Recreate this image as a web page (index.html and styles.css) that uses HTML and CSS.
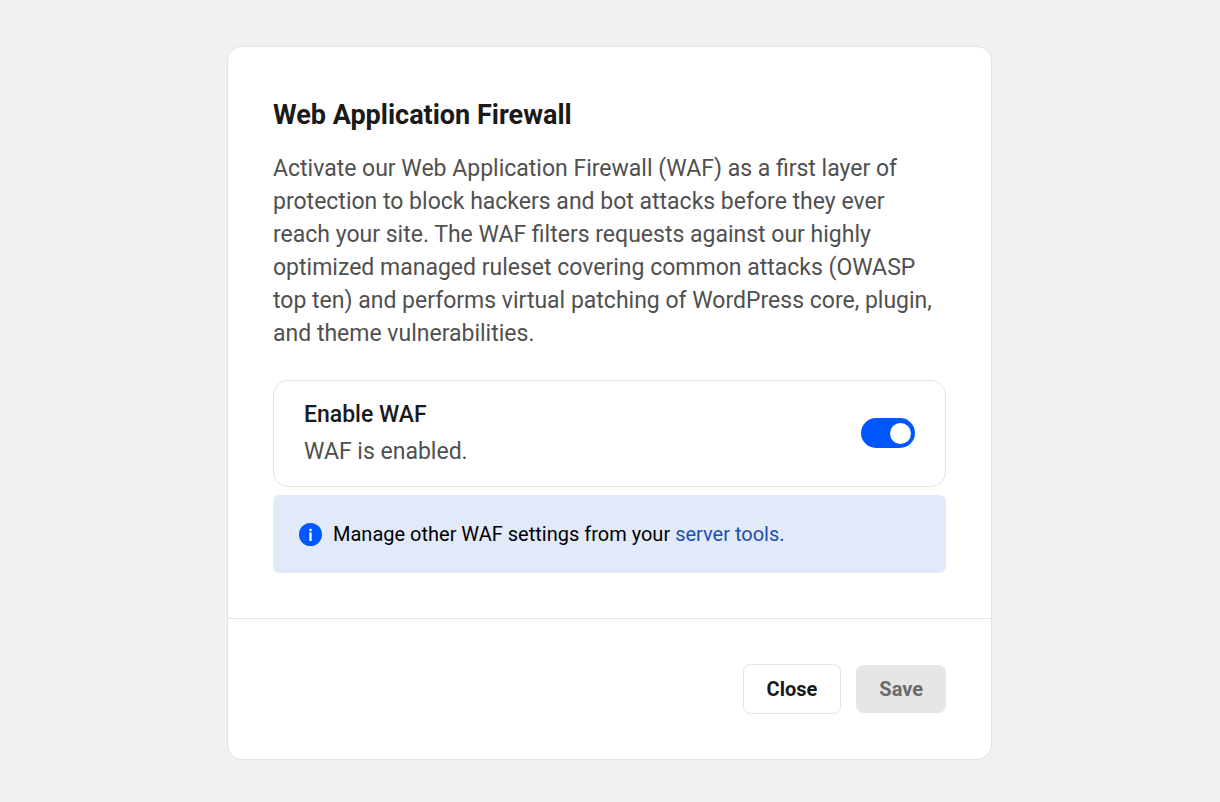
FILE: index.html
```html
<!DOCTYPE html>
<html lang="en">
<head>
    <meta charset="UTF-8">
    <meta name="viewport" content="width=device-width, initial-scale=1.0">
    <title>Web Application Firewall</title>
    <link rel="stylesheet" href="styles.css">
</head>
<body>
    <form class="modal">
        <div class="modal-body">
            <h1>Web Application Firewall</h1>
            <p class="description">Activate our Web Application Firewall (WAF) as a first layer of protection to block hackers and bot attacks before they ever reach your site. The WAF filters requests against our highly optimized managed ruleset covering common attacks (OWASP top ten) and performs virtual patching of WordPress core, plugin, and theme vulnerabilities.</p>

            <div class="setting">
                <div class="setting-text">
                    <label for="waf">Enable WAF</label>
                    <p>WAF is enabled.</p>
                </div>
                <input type="checkbox" class="toggle" id="waf" checked>
            </div>

            <div class="notice">
                <svg class="notice-icon" viewBox="0 0 24 24" aria-hidden="true">
                    <circle cx="12" cy="12" r="12" fill="#0057ff"/>
                    <rect x="10.8" y="6.1" width="2.4" height="2.4" fill="#fff"/>
                    <path d="M12 9.8v9" stroke="#fff" stroke-width="2.4"/>
                </svg>
                <p>Manage other WAF settings from your <a href="#">server tools.</a></p>
            </div>
        </div>

        <div class="modal-footer">
            <button type="button" class="btn">Close</button>
            <button type="submit" class="btn btn-save" disabled>Save</button>
        </div>
    </form>
</body>
</html>
```
FILE: styles.css
```css
* {
    box-sizing: border-box;
}

body {
    margin: 0;
    padding: 46px 25px 42px 24px;
    background: #f1f1f1;
    color: #505050;
    font-family: Roboto, "Liberation Sans", sans-serif;
}

h1, p {
    margin: 0;
}

.modal {
    max-width: 765px;
    margin: 0 auto;
    background: #fff;
    border: 1px solid #e3e3e3;
    border-radius: 15px;
}

.modal-body {
    padding: 45px;
}

h1 {
    margin-bottom: 14px;
    color: #1a1a1a;
    font-size: 27px;
    font-weight: 700;
    line-height: 46px;
}

.description {
    margin-bottom: 30px;
    padding-right: 6px;
    font-size: 23px;
    line-height: 33px;
}

/* Toggle row */
.setting {
    display: flex;
    align-items: center;
    justify-content: space-between;
    gap: 24px;
    margin-bottom: 8px;
    padding: 15px 30px 16px;
    border: 1px solid #e3e3e3;
    border-radius: 15px;
    font-size: 23px;
    line-height: 37px;
}

.setting label {
    color: #1a1a1a;
    font-weight: 500;
}

.toggle {
    flex: none;
    display: flex;
    align-items: center;
    justify-content: flex-end;
    width: 54px;
    height: 30px;
    margin: 0;
    padding: 4px;
    appearance: none;
    background: #0057ff;
    border-radius: 15px;
    cursor: pointer;
}

.toggle::before {
    content: "";
    width: 21px;
    height: 21px;
    background: #fff;
    border-radius: 50%;
}

.toggle:not(:checked) {
    justify-content: flex-start;
    background: #8c8c8c;
}

/* Info notice */
.notice {
    display: flex;
    align-items: center;
    gap: 11px;
    padding: 24px 26px;
    background: #e2eafa;
    border-radius: 6px;
    color: #000;
    font-size: 20px;
    line-height: 30px;
}

.notice-icon {
    flex: none;
    width: 23px;
    height: 23px;
}

.notice a {
    color: #1a4fb4;
    text-decoration: none;
}

.modal-footer {
    display: flex;
    justify-content: flex-end;
    align-items: center;
    gap: 15px;
    padding: 45px;
    border-top: 1px solid #e3e3e3;
}

.btn {
    padding: 12px 23px;
    background: #fff;
    border: 1px solid #e3e3e3;
    border-radius: 8px;
    color: #1a1a1a;
    font-family: inherit;
    font-size: 20px;
    font-weight: 700;
    line-height: 24px;
    cursor: pointer;
}

.btn-save {
    background: #e6e6e6;
    border: none;
    color: #6b6b6b;
    cursor: default;
}
```
